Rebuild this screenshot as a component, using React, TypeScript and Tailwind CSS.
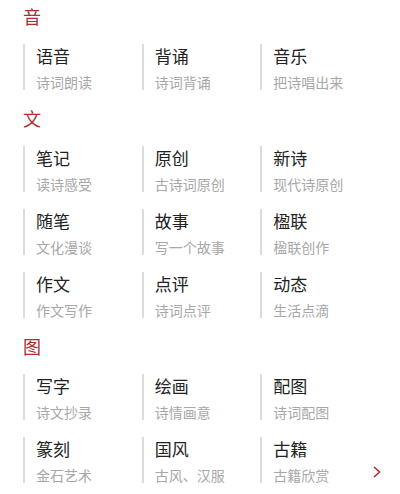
import React from "react";

type Item = { title: string; desc: string };
type Section = { head: string; items: Item[] };

const sections: Section[] = [
  {
    head: "音",
    items: [
      { title: "语音", desc: "诗词朗读" },
      { title: "背诵", desc: "诗词背诵" },
      { title: "音乐", desc: "把诗唱出来" },
    ],
  },
  {
    head: "文",
    items: [
      { title: "笔记", desc: "读诗感受" },
      { title: "原创", desc: "古诗词原创" },
      { title: "新诗", desc: "现代诗原创" },
      { title: "随笔", desc: "文化漫谈" },
      { title: "故事", desc: "写一个故事" },
      { title: "楹联", desc: "楹联创作" },
      { title: "作文", desc: "作文写作" },
      { title: "点评", desc: "诗词点评" },
      { title: "动态", desc: "生活点滴" },
    ],
  },
  {
    head: "图",
    items: [
      { title: "写字", desc: "诗文抄录" },
      { title: "绘画", desc: "诗情画意" },
      { title: "配图", desc: "诗词配图" },
      { title: "篆刻", desc: "金石艺术" },
      { title: "国风", desc: "古风、汉服" },
      { title: "古籍", desc: "古籍欣赏" },
    ],
  },
];

const App: React.FC = () => {
  return (
    <div
      className="relative w-[400px] h-[494px] overflow-hidden bg-white pl-[23px] pr-[21px] pt-[4px] flex flex-col gap-[16px]"
      style={{ fontFamily: '"Noto Sans CJK SC", "Noto Sans", sans-serif' }}
    >
      {sections.map((sec) => (
        <div key={sec.head}>
          {/* 分组标题 */}
          <div className="text-[18px] leading-[24px] text-[#a8302f] mb-[16px]">{sec.head}</div>
          <div className="grid grid-cols-3 gap-y-[17px]">
            {sec.items.map((it) => (
              <div key={it.title} className="border-l-2 border-[#dcdcdc] pl-[11px] h-[46px]">
                <p className="text-[17px] leading-[24px] text-[#222]">{it.title}</p>
                <p className="text-[14px] leading-[18px] mt-[5px] text-[#a8a8a8]">{it.desc}</p>
              </div>
            ))}
          </div>
        </div>
      ))}

      {/* 右下角箭头 */}
      <svg
        className="absolute left-[371px] top-[465px]"
        width="12"
        height="14"
        viewBox="0 0 12 14"
        fill="none"
        stroke="#a8302f"
        strokeWidth="1.6"
      >
        <path d="M3 2 L8.5 7 L3 12" />
      </svg>
    </div>
  );
};

export default App;
